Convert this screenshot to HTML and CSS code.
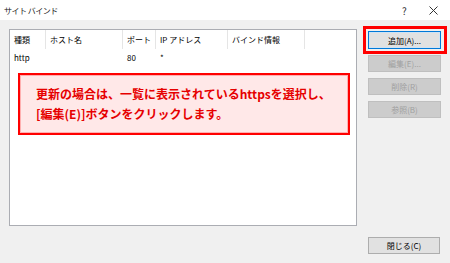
FILE: index.html
```html
<!DOCTYPE html>
<html>
<head>
    <title>サイト バインド</title>
    <link rel="stylesheet" href="styles.css">
</head>
<body>
    <div class="dialog">
        <div class="titlebar">
            <span class="title">サイト バインド</span>
            <span class="help">?</span>
            <svg class="close-x" width="9" height="9" viewBox="0 0 9 9">
                <path d="M0.5 0.5 L8.5 8.5 M8.5 0.5 L0.5 8.5" stroke="#333" stroke-width="1" fill="none"/>
            </svg>
        </div>

        <div class="content">
            <div class="list">
                <div class="row head">
                    <span class="col c1">種類</span>
                    <span class="col c2">ホスト名</span>
                    <span class="col c3">ポート</span>
                    <span class="col c4">IP アドレス</span>
                    <span class="col c5">バインド情報</span>
                </div>
                <div class="row">
                    <span class="col c1">http</span>
                    <span class="col c2"></span>
                    <span class="col c3">80</span>
                    <span class="col c4">*</span>
                    <span class="col c5"></span>
                </div>

                <!-- annotation over the list -->
                <div class="callout">
                    更新の場合は、一覧に表示されているhttpsを選択し、<br>
                    [編集(E)]ボタンをクリックします。
                </div>
            </div>

            <div class="side">
                <div class="btn-wrap">
                    <button class="btn primary">追加(A)...</button>
                    <div class="mark"></div>
                </div>
                <button class="btn" disabled>編集(E)...</button>
                <button class="btn" disabled>削除(R)</button>
                <button class="btn" disabled>参照(B)</button>
            </div>
        </div>

        <div class="footer">
            <button class="btn">閉じる(C)</button>
        </div>
    </div>
</body>
</html>
```

FILE: styles.css
```css
body {
    margin: 0;
    padding: 0;
    font-family: "Noto Sans CJK JP", "Noto Sans", sans-serif;
    font-size: 8px;
    color: #000;
}
.dialog {
    width: 450px;
    height: 263px;
    background-color: #f0f0f0;
}
.titlebar {
    height: 20px;
    background-color: #fff;
    display: flex;
    align-items: center;
    padding-left: 4px;
}
.title {
    flex: 1;
    color: #222;
    letter-spacing: -0.5px;
}
.help {
    width: 27px;
    font-size: 10px;
    color: #333;
}
.close-x {
    margin-right: 12px;
}
.content {
    display: flex;
    padding: 9px 0 0 9px;
}
.list {
    position: relative;
    width: 346px;
    height: 195px;
    background-color: #fff;
    border: 1px solid #abadb3;
}
.row {
    display: flex;
    height: 16px;
    align-items: center;
}
.row.head {
    height: 19px;
}
.col {
    box-sizing: border-box;
    padding-left: 4px;
    height: 100%;
    display: flex;
    align-items: center;
}
.head .col {
    border-right: 1px solid #e5e5e5;
}
.c1 { width: 36px; }
.c2 { width: 77px; }
.c3 { width: 33px; }
.c4 { width: 72px; }
.c5 { width: 77px; }
.callout {
    position: absolute;
    left: 8px;
    top: 43px;
    width: 312px;
    height: 58px;
    padding: 0 0 0 16px;
    background-color: #ffe8e8;
    border: 2px solid #ff0000;
    box-shadow: inset 0 0 0 1px #ffb0b0;
    color: #e60000;
    font-weight: bold;
    font-size: 12px;
    line-height: 20px;
    display: flex;
    flex-direction: column;
    justify-content: center;
}
.side {
    display: flex;
    flex-direction: column;
    gap: 6px;
    margin-left: 11px;
    padding-top: 2px;
}
.btn-wrap {
    position: relative;
}
.btn {
    display: block;
    box-sizing: border-box;
    width: 73px;
    height: 17px;
    padding: 0;
    font-family: inherit;
    font-size: 8px;
    color: #000;
    background-color: #e1e1e1;
    border: 1px solid #adadad;
}
.btn.primary {
    height: 18px;
    border: 1px solid #0078d7;
    box-shadow: inset 0 0 0 1px #cfe3f5;
}
.btn:disabled {
    color: #a0a0a0;
    background-color: #cccccc;
    border-color: #bfbfbf;
}
.mark {
    position: absolute;
    left: -5px;
    top: -5px;
    width: 84px;
    height: 28px;
    box-sizing: border-box;
    border: 3px solid #ff0000;
}
.footer {
    display: flex;
    padding: 11px 0 0 368px;
}
.footer .btn {
    width: 72px;
}
```
